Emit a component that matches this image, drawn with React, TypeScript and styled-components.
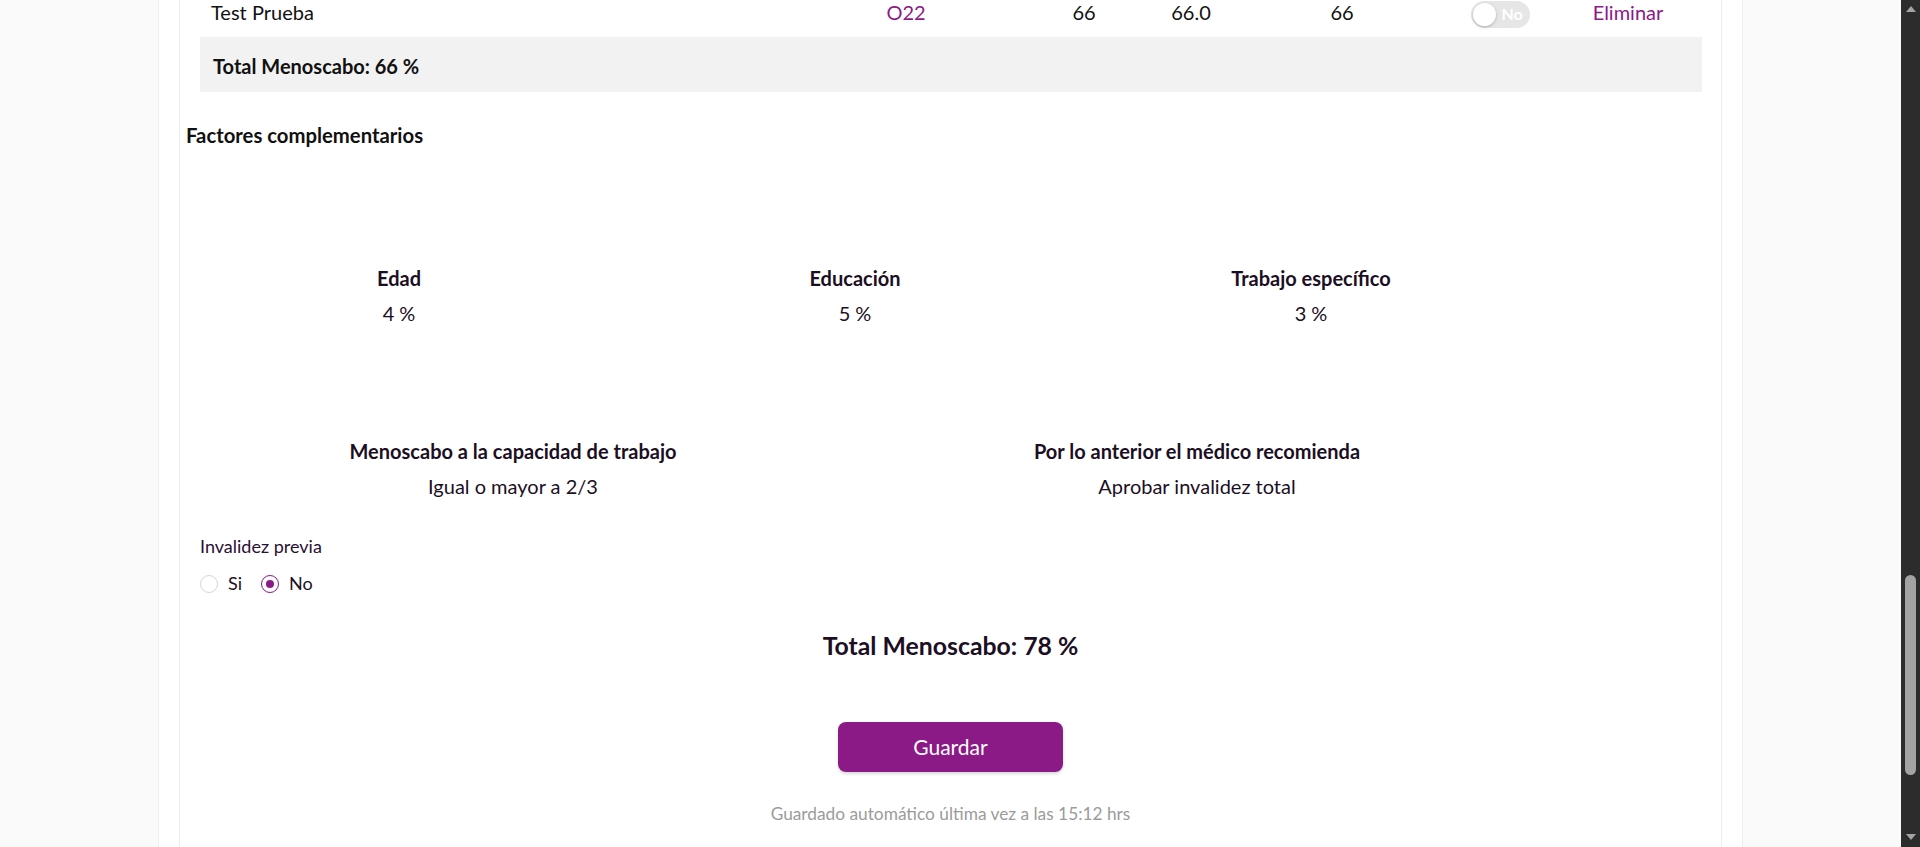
import React from "react";
import styled, { createGlobalStyle } from "styled-components";

const purple = "#8b1a87";
const ink = "#1c0f24";

const GlobalStyle = createGlobalStyle`
  *, *::before, *::after {
    box-sizing: border-box;
  }

  html,
  body {
    margin: 0;
    padding: 0;
    height: 100%;
    overflow: hidden;
  }

  body {
    font-family: Lato, "Open Sans", sans-serif;
    color: ${ink};
    background: #fafafa;
  }

  #root {
    height: 100%;
  }
`;

const rows = [
  { name: "Test Prueba", code: "O22", value: "66", adjusted: "66.0", final: "66" },
];

const factors = [
  { label: "Edad", value: "4 %" },
  { label: "Educación", value: "5 %" },
  { label: "Trabajo específico", value: "3 %" },
];

const results = [
  { label: "Menoscabo a la capacidad de trabajo", value: "Igual o mayor a 2/3" },
  { label: "Por lo anterior el médico recomienda", value: "Aprobar invalidez total" },
];

const App = () => {
  const [previous, setPrevious] = React.useState("no");

  return (
    <Screen>
      <GlobalStyle />
      <Viewport>
        <Page>
          <Card>
            <TableWrap>
              {rows.map((row) => (
                <ItemRow key={row.name}>
                  <Cell $align="left">{row.name}</Cell>
                  <Cell $link>{row.code}</Cell>
                  <Cell>{row.value}</Cell>
                  <Cell>{row.adjusted}</Cell>
                  <Cell>{row.final}</Cell>
                  <ToggleCell>
                    <Toggle>
                      <Knob />
                      <ToggleText>No</ToggleText>
                    </Toggle>
                  </ToggleCell>
                  <Cell $link>Eliminar</Cell>
                </ItemRow>
              ))}
              <TotalBand>Total Menoscabo: 66 %</TotalBand>
            </TableWrap>

            <SectionTitle>Factores complementarios</SectionTitle>

            <InfoGrid $cols={3} $top={119}>
              {factors.map((f) => (
                <InfoItem key={f.label}>
                  <InfoLabel>{f.label}</InfoLabel>
                  <InfoValue>{f.value}</InfoValue>
                </InfoItem>
              ))}
            </InfoGrid>

            <InfoGrid $cols={2} $top={114}>
              {results.map((r) => (
                <InfoItem key={r.label}>
                  <InfoLabel>{r.label}</InfoLabel>
                  <InfoValue>{r.value}</InfoValue>
                </InfoItem>
              ))}
            </InfoGrid>

            <PriorBlock>
              <PriorLabel>Invalidez previa</PriorLabel>
              <RadioRow>
                <RadioOption onClick={() => setPrevious("si")}>
                  <RadioDot $checked={previous === "si"} />
                  Si
                </RadioOption>
                <RadioOption onClick={() => setPrevious("no")}>
                  <RadioDot $checked={previous === "no"} />
                  No
                </RadioOption>
              </RadioRow>
            </PriorBlock>

            <GrandTotal>Total Menoscabo: 78 %</GrandTotal>
            <SaveButton type="button">Guardar</SaveButton>
            <AutoSave>Guardado automático última vez a las 15:12 hrs</AutoSave>
          </Card>
        </Page>
      </Viewport>

      <ScrollBar>
        <ArrowUp />
        <ScrollTrack>
          <ScrollThumb />
        </ScrollTrack>
        <ArrowDown />
      </ScrollBar>
    </Screen>
  );
};

export default App;

const Screen = styled.div`
  display: flex;
  height: 100vh;
`;

const Viewport = styled.div`
  flex: 1;
  height: 100%;
  overflow: hidden;
  background: #fafafa;
`;

const Page = styled.div`
  width: 1585px;
  min-height: 100%;
  margin: 0 auto;
  padding: 0 20px;
  display: flex;
  flex-direction: column;
  background: #fff;
  border-left: 1px solid #efefef;
  border-right: 1px solid #efefef;
`;

const Card = styled.div`
  flex: 1;
  display: flex;
  flex-direction: column;
  padding-bottom: 60px;
  border-left: 1px solid #ececec;
  border-right: 1px solid #ececec;
  background: #fff;
`;

const TableWrap = styled.div`
  padding: 0 19px 0 20px;
`;

const ItemRow = styled.div`
  display: grid;
  grid-template-columns: 590px 232px 124px 90px 212px 104px 152px;
  align-items: center;
  height: 37px;
  padding-bottom: 10px;
  font-size: 20px;
  line-height: 1.2;
  color: #111;
`;

const Cell = styled.div<{ $align?: "left" | "center"; $link?: boolean }>`
  display: flex;
  justify-content: ${({ $align }) => ($align === "left" ? "flex-start" : "center")};
  padding: 0 0 4px ${({ $align }) => ($align === "left" ? "11px" : "0")};
  color: ${({ $link }) => ($link ? purple : "#111")};
  white-space: nowrap;
`;

const ToggleCell = styled.div`
  display: flex;
  justify-content: center;
`;

const Toggle = styled.div`
  display: flex;
  align-items: center;
  width: 59px;
  height: 27px;
  padding: 0 2px;
  border-radius: 14px;
  background: #e6e6e6;
`;

const Knob = styled.span`
  width: 23px;
  height: 23px;
  border-radius: 50%;
  background: #fff;
  box-shadow: 0 1px 3px rgba(0, 0, 0, 0.25);
`;

const ToggleText = styled.span`
  margin-left: 6px;
  font-size: 16px;
  font-weight: 700;
  color: #fff;
`;

const TotalBand = styled.div`
  display: flex;
  align-items: center;
  height: 55px;
  padding: 2px 13px 0;
  background: #f2f2f2;
  font-size: 20px;
  font-weight: 700;
  line-height: 1.2;
  color: #111;
`;

const SectionTitle = styled.h5`
  margin: 31px 0 0;
  padding-left: 6px;
  font-size: 20.3px;
  font-weight: 700;
  line-height: 1.2;
  color: #111;
`;

const InfoGrid = styled.div<{ $cols: number; $top: number }>`
  display: grid;
  grid-template-columns: repeat(${({ $cols }) => $cols}, 1fr);
  width: 1368px;
  margin: ${({ $top }) => $top}px 0 0 -9px;
`;

const InfoItem = styled.div`
  display: flex;
  flex-direction: column;
  align-items: center;
  text-align: center;
`;

const InfoLabel = styled.div`
  font-size: 20px;
  font-weight: 700;
  line-height: 1.2;
`;

const InfoValue = styled.div`
  margin-top: 11px;
  font-size: 20px;
  line-height: 1.2;
`;

const PriorBlock = styled.div`
  margin-top: 38px;
  padding-left: 20px;
`;

const PriorLabel = styled.div`
  font-size: 18px;
  line-height: 1.2;
  color: #2a0f33;
`;

const RadioRow = styled.div`
  display: flex;
  align-items: center;
  gap: 19px;
  height: 20px;
  margin-top: 16px;
`;

const RadioOption = styled.label`
  display: flex;
  align-items: center;
  gap: 10px;
  font-size: 18px;
  line-height: 1.2;
  cursor: pointer;
`;

const RadioDot = styled.span<{ $checked: boolean }>`
  display: flex;
  align-items: center;
  justify-content: center;
  width: 18px;
  height: 18px;
  border-radius: 50%;
  border: ${({ $checked }) => ($checked ? `1.5px solid ${purple}` : "1px solid #d6d6d6")};
  background: #fff;

  &::after {
    content: "";
    width: 8px;
    height: 8px;
    border-radius: 50%;
    background: ${({ $checked }) => ($checked ? purple : "transparent")};
  }
`;

const GrandTotal = styled.div`
  margin-top: 37px;
  text-align: center;
  font-size: 24.8px;
  font-weight: 700;
  line-height: 1.2;
`;

const SaveButton = styled.button`
  align-self: center;
  width: 225px;
  height: 50px;
  margin-top: 61px;
  border: none;
  border-radius: 8px;
  background: ${purple};
  color: #fff;
  font-family: Lato, "Open Sans", sans-serif;
  font-size: 21px;
  box-shadow: 0 2px 3px rgba(0, 0, 0, 0.15);
  cursor: pointer;
`;

const AutoSave = styled.div`
  margin-top: 32px;
  text-align: center;
  font-size: 17.3px;
  line-height: 1.2;
  color: #9b9b9b;
`;

const ScrollBar = styled.div`
  display: flex;
  flex-direction: column;
  align-items: center;
  width: 19px;
  height: 100%;
  background: #2c2c2c;
`;

const ArrowUp = styled.span`
  margin-top: 6px;
  border-left: 5px solid transparent;
  border-right: 5px solid transparent;
  border-bottom: 6px solid #a3a3a3;
`;

const ArrowDown = styled.span`
  margin-bottom: 7px;
  border-left: 5px solid transparent;
  border-right: 5px solid transparent;
  border-top: 6px solid #a3a3a3;
`;

const ScrollTrack = styled.div`
  flex: 1;
  width: 100%;
  display: flex;
  justify-content: center;
`;

const ScrollThumb = styled.div`
  width: 11px;
  height: 200px;
  margin-top: 563px;
  border-radius: 6px;
  background: #a3a3a3;
`;
